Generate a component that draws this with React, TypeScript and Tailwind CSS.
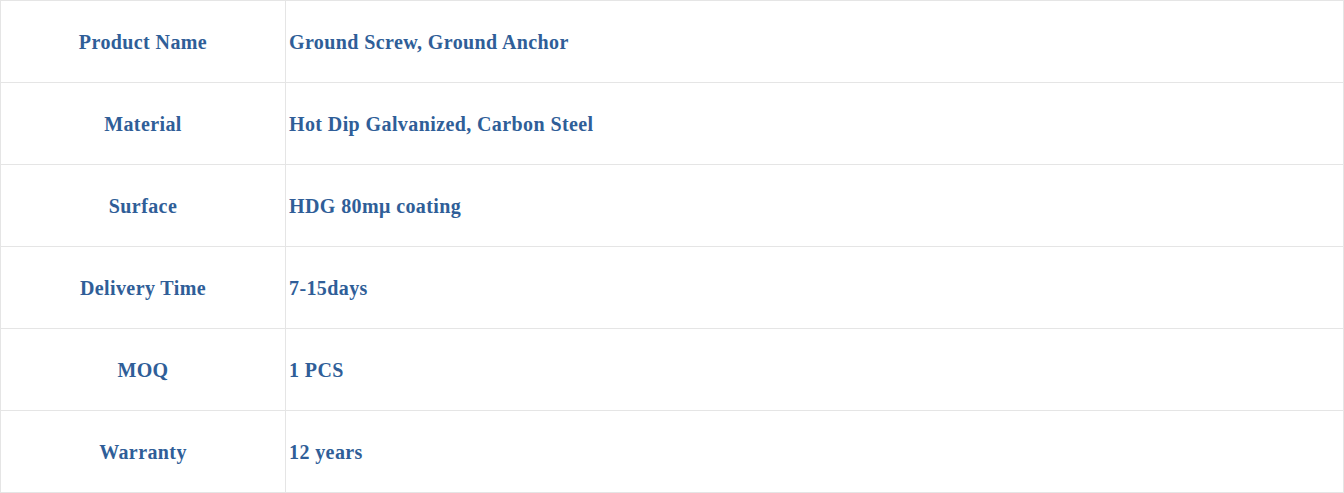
import React from "react";

const rows: [string, string][] = [
  ["Product Name", "Ground Screw, Ground Anchor"],
  ["Material", "Hot Dip Galvanized, Carbon Steel"],
  ["Surface", "HDG 80mμ coating"],
  ["Delivery Time", "7-15days"],
  ["MOQ", "1 PCS"],
  ["Warranty", "12 years"],
];

export default function App() {
  return (
    <div className="w-[1344px] h-[493px] bg-white">
      <table
        className="w-[1344px] border-collapse text-[20px] font-bold tracking-[0.4px] text-[#2f5e98]"
        style={{ fontFamily: '"Liberation Serif", "Times New Roman", serif' }}
      >
        <tbody>
          {rows.map(([k, v]) => (
            <tr key={k} className="h-[82px]">
              <td className="w-[285px] border border-[#e5e5e5] text-center align-middle p-0">{k}</td>
              <td className="border border-[#e5e5e5] text-left align-middle pl-[3px] pr-0 py-0">{v}</td>
            </tr>
          ))}
        </tbody>
      </table>
    </div>
  );
}
